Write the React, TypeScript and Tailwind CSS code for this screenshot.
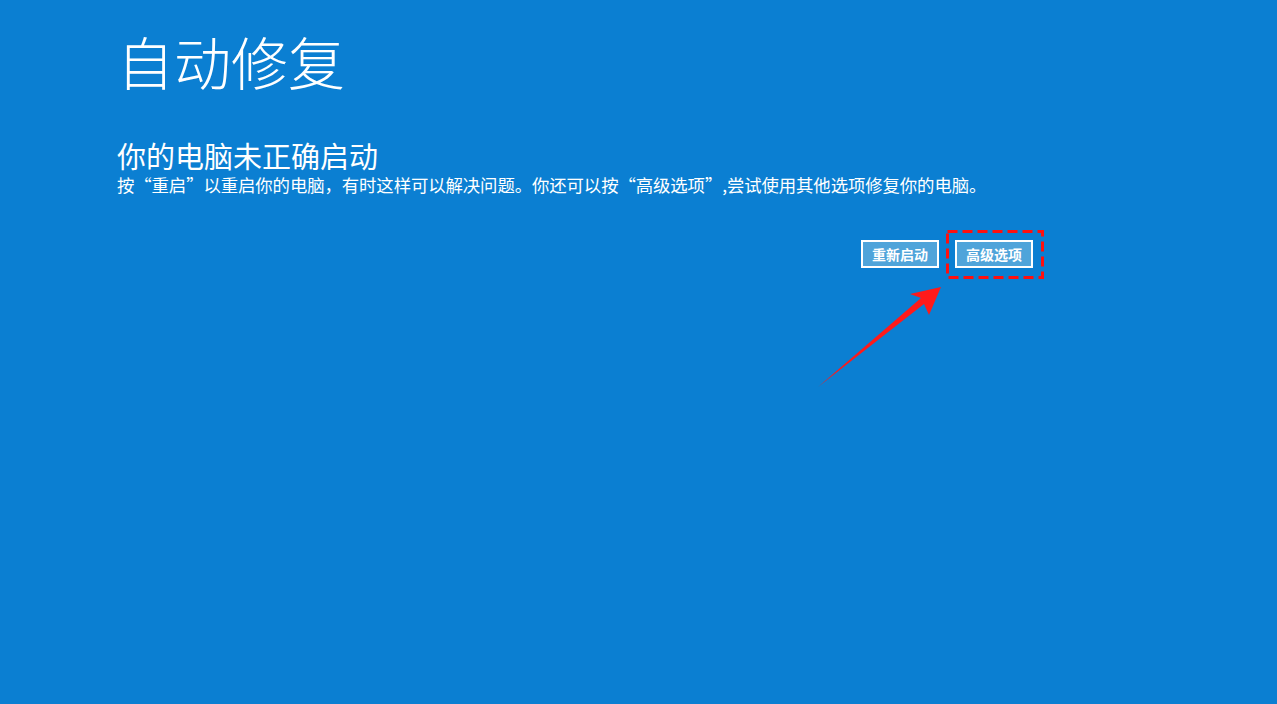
import React from 'react';

const cjk = { fontFamily: '"Noto Sans CJK SC", "Noto Sans", sans-serif' };

const Arrow: React.FC = () => (
  <svg
    className="absolute left-[810px] top-[280px] pointer-events-none"
    width="140"
    height="115"
    viewBox="810 280 140 115"
  >
    <polygon points="941,287 910,294 921,298 818,387 924,304 929,315" fill="#ff1a1a" />
  </svg>
);

const DashedBox: React.FC = () => (
  <svg
    className="absolute -left-[9px] -top-[10px] pointer-events-none"
    width="98"
    height="49"
    viewBox="0 0 98 49"
  >
    <rect
      x="1.5"
      y="1.5"
      width="95"
      height="46"
      fill="none"
      stroke="#ff1010"
      strokeWidth="3"
      strokeDasharray="10 5"
    />
  </svg>
);

const App: React.FC = () => {
  return (
    <div className="relative w-full h-[704px] bg-[#0b7fd2] text-white overflow-hidden" style={cjk}>
      <div className="pl-[117px] pt-[21px]">
        <h1 className="text-[57px] leading-[78px] font-light">自动修复</h1>
        <h2 className="mt-[38px] text-[29px] leading-[36px] font-normal">你的电脑未正确启动</h2>
        <p className="mt-[1px] text-[17.4px] leading-[22px] tracking-[-0.1px]">
          按“重启”以重启你的电脑，有时这样可以解决问题。你还可以按“高级选项”,尝试使用其他选项修复你的电脑。
        </p>
      </div>

      <div className="flex justify-end gap-[16px] pr-[244px] mt-[44px]">
        <button className="w-[78px] h-[28px] border-2 border-white bg-[#4fa4da] text-[14px] font-bold leading-none text-white">
          重新启动
        </button>
        <div className="relative">
          <button className="w-[78px] h-[28px] border-2 border-white bg-[#4fa4da] text-[14px] font-bold leading-none text-white">
            高级选项
          </button>
          <DashedBox />
        </div>
      </div>

      <Arrow />
    </div>
  );
};

export default App;
